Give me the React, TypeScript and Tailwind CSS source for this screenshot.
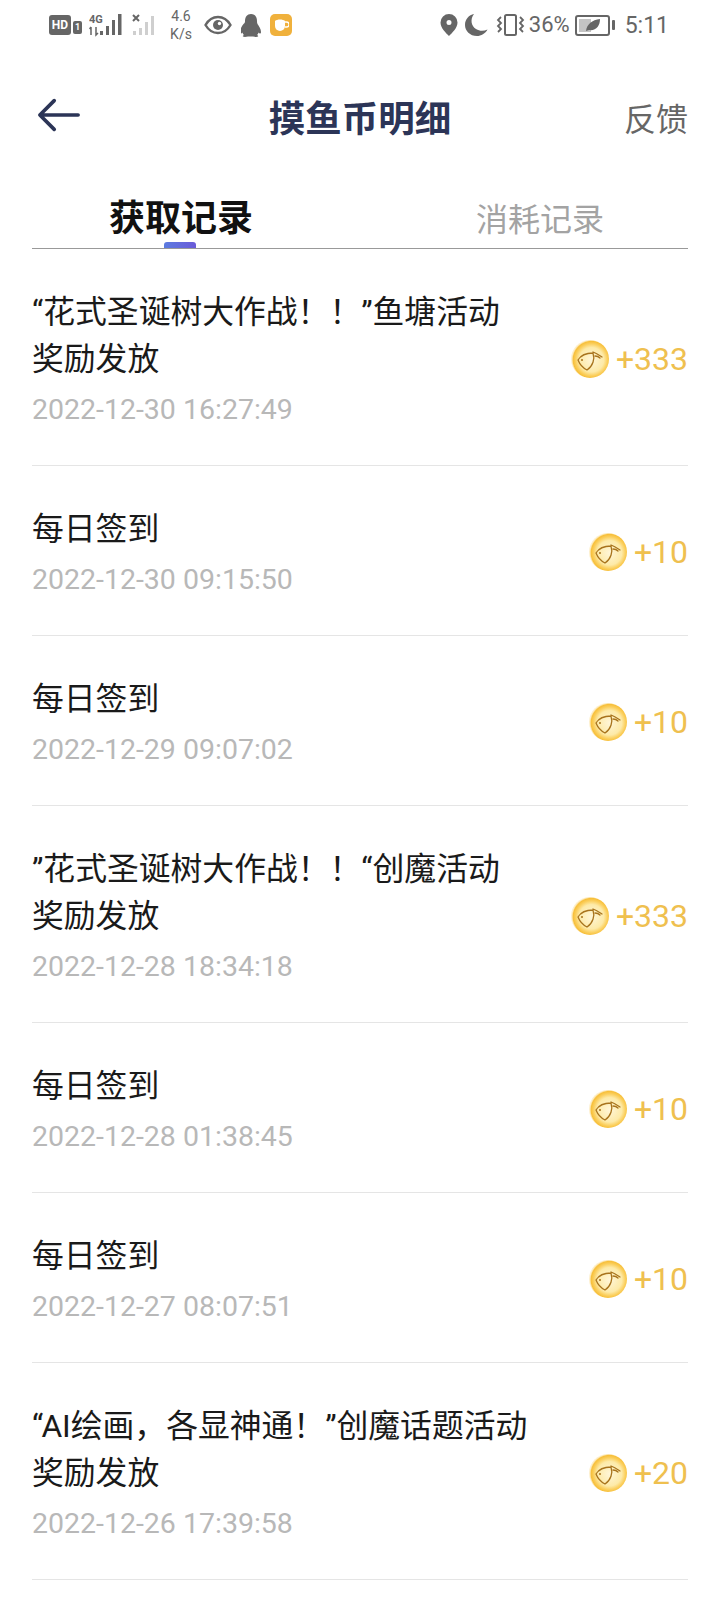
const cjk = "font-['Roboto','Noto_Sans_CJK_SC',sans-serif]"

const records = [
  { title: '“花式圣诞树大作战！！”鱼塘活动', sub: '奖励发放', time: '2022-12-30 16:27:49', amount: '+333' },
  { title: '每日签到', time: '2022-12-30 09:15:50', amount: '+10' },
  { title: '每日签到', time: '2022-12-29 09:07:02', amount: '+10' },
  { title: '”花式圣诞树大作战！！“创魔活动', sub: '奖励发放', time: '2022-12-28 18:34:18', amount: '+333' },
  { title: '每日签到', time: '2022-12-28 01:38:45', amount: '+10' },
  { title: '每日签到', time: '2022-12-27 08:07:51', amount: '+10' },
  { title: '“AI绘画，各显神通！”创魔话题活动', sub: '奖励发放', time: '2022-12-26 17:39:58', amount: '+20' },
]

function Coin() {
  return (
    <svg width="38" height="38" viewBox="0 0 38 38" className="shrink-0">
      <defs>
        <radialGradient id="coin" cx="54%" cy="52%" r="52%">
          <stop offset="0%" stopColor="#fff6d8" />
          <stop offset="62%" stopColor="#fdeaa8" />
          <stop offset="80%" stopColor="#fbd060" />
          <stop offset="93%" stopColor="#f7bf3a" />
          <stop offset="100%" stopColor="#fad36f" stopOpacity="0.35" />
        </radialGradient>
      </defs>
      <circle cx="19" cy="19" r="19" fill="url(#coin)" />
      <path d="M7 20C10 15 16 13 22 13M7 20c2 5 5 8 9 10M22 13c2 6 0 13-6 17M22 12c3 1 6 3 9 5M24 16c2 0 4 1 5 2" fill="none" stroke="#a8731c" strokeWidth="1.300" strokeLinecap="round" strokeLinejoin="round" />
      <circle cx="11" cy="20" r="1" fill="#a8731c" />
    </svg>
  )
}

function StatusBar() {
  return (
    <div className="h-[50px] flex items-center pl-[49px] pr-[51px] text-[#666666] font-['Roboto',sans-serif]">
      {/* HD + sim */}
      <div className="w-[22px] h-[20px] rounded-[3px] bg-[#666666] text-white text-[12px] font-bold leading-[20px] text-center">HD</div>
      <div className="ml-[2px] mt-[5px] w-[9px] h-[13px] rounded-[2px] bg-[#666666] text-white text-[9px] font-bold leading-[13px] text-center">1</div>
      {/* signal 1 */}
      <svg width="36" height="24" viewBox="0 0 36 24" className="ml-[7px]" fill="#666666">
        <text x="0" y="10" fontSize="11" fontWeight="700" fontFamily="Roboto">4G</text>
        <path d="M2 14v8M0.500 16l1.500-2M7 14v8l2-2" stroke="#666666" strokeWidth="1.500" fill="none" />
        <rect x="11" y="18" width="3" height="4" />
        <rect x="17" y="13" width="3" height="9" />
        <rect x="23" y="7" width="3" height="15" />
        <rect x="29" y="1" width="3.500" height="21" />
      </svg>
      {/* signal 2 */}
      <svg width="26" height="24" viewBox="0 0 26 24" className="ml-[7px]">
        <path d="M1 2l6 6M7 2l-6 6" stroke="#666666" strokeWidth="2" />
        <g fill="#cfcfcf">
          <rect x="1" y="18" width="3" height="4" />
          <rect x="7" y="15" width="3" height="7" />
          <rect x="13" y="9" width="3" height="13" />
          <rect x="19" y="3" width="3" height="19" />
        </g>
      </svg>
      <div className="ml-[10px] w-[26px] text-[14px] leading-[18px] text-center">4.6<br />K/s</div>
      {/* eye */}
      <svg width="28" height="20" viewBox="0 0 28 20" className="ml-[10px]" fill="none">
        <path d="M1.5 10C5 4 9 2 14 2s9 2 12.5 8C23 16 19 18 14 18S5 16 1.5 10z" stroke="#666666" strokeWidth="2.4" />
        <circle cx="14" cy="10" r="5" fill="#666666" />
        <circle cx="15.5" cy="8.5" r="1.7" fill="#fff" />
      </svg>
      {/* qq penguin */}
      <svg width="20" height="23" viewBox="0 0 20 23" className="ml-[9px]" fill="#666666">
        <path d="M10 0c4 0 6 3 6 7 0 1 0 2 .5 3 1.500 2 3.500 5 3.500 8 0 1-.5 1.500-1 1.500s-1-.5-1.500-1c-.2 1-.7 2-1.500 2.500 1 .5 1.500 1 1 1.500-.5.5-3 .5-5 0h-5c-2 .5-4.500.5-5 0-.5-.5 0-1 1-1.500-.8-.5-1.300-1.500-1.500-2.500-.5.5-1 1-1.500 1s-1-.5-1-1.500c0-3 2-6 3.500-8C4 9 4 8 4 7c0-4 2-7 6-7z" />
      </svg>
      {/* coffee app */}
      <div className="ml-[9px] w-[22px] h-[22px] rounded-[5px] bg-[#f0b13c] flex items-center justify-center">
        <svg width="16" height="14" viewBox="0 0 16 14" fill="#fff">
          <path d="M2 3c2-2 8-2 10 0v5a5 5 0 0 1-10 0z" />
          <path d="M12 4h1.500a2 2 0 0 1 0 5H12" fill="none" stroke="#fff" strokeWidth="1.300" />
        </svg>
      </div>
      <div className="flex-1" />
      {/* location */}
      <svg width="18" height="22" viewBox="0 0 18 22" fill="#666666">
        <path fillRule="evenodd" d="M9 0a8.500 8.500 0 0 1 8.500 8.500C17.500 14 12 19 9 22 6 19 .5 14 .5 8.500A8.500 8.500 0 0 1 9 0zm0 6a2.500 2.500 0 1 0 0 5 2.500 2.500 0 0 0 0-5z" />
      </svg>
      {/* moon */}
      <svg width="23" height="22" viewBox="0 0 23 22" className="ml-[7px]" fill="#666666">
        <path d="M9 0C5 5 6 12 11 15c4 2.500 8 2 11.500 .5C20.500 19.500 16 22 12 22 5 22 0 17 0 11 0 5 4 1 9 0z" />
      </svg>
      {/* vibrate */}
      <svg width="29" height="22" viewBox="0 0 29 22" className="ml-[8px]" fill="none" stroke="#666666">
        <rect x="9" y="1" width="11" height="20" rx="1.500" strokeWidth="2" />
        <path d="M5 3l-3 3 3 3-3 3 3 3-3 3M24 3l3 3-3 3 3 3-3 3 3 3" strokeWidth="1.800" />
      </svg>
      <div className="ml-[4px] text-[22px] leading-none">36%</div>
      {/* battery */}
      <div className="ml-[5px] w-[35px] h-[21px] rounded-[3px] border-2 border-[#666666] flex items-center p-[2px] relative">
        <div className="w-[12px] h-full bg-[#c4c4c4]" />
        <svg width="16" height="13" viewBox="0 0 16 13" className="absolute left-[8px] top-[2px]" fill="#666666">
          <path d="M1 12C2 5 7 1 15 0c0 7-4 12-11 11l-3 1z" />
        </svg>
      </div>
      <div className="ml-[2px] w-[3px] h-[10px] rounded-[1px] bg-[#666666]" />
      <div className="ml-[10px] text-[23px] leading-none">5:11</div>
    </div>
  )
}

export default function App() {
  return (
    <div className={`w-[720px] h-[1600px] overflow-hidden bg-white ${cjk}`}>
      <StatusBar />

      {/* Header */}
      <div className="mt-[22px] h-[92px] px-[32px] flex items-center justify-between relative">
        <svg width="44" height="34" viewBox="0 0 46 34" fill="none" stroke="#2c3557" strokeWidth="3.800" strokeLinecap="round" strokeLinejoin="round" className="ml-[5px] -mt-[6px]">
          <path d="M43 17H3M18 2L3 17l15 15" />
        </svg>
        <div className="absolute left-0 right-0 mt-[4px] text-center text-[36.500px] leading-[44px] font-bold text-[#2c3557]">摸鱼币明细</div>
        <div className="mt-[4px] text-[32px] leading-[40px] text-[#666666]">反馈</div>
      </div>

      {/* Tabs */}
      <div className="mx-[32px] h-[85px] border-b border-[#999999] flex relative">
        <div className="w-1/2 pl-[77px] pt-[31px] text-[36px] leading-[48px] font-bold text-[#111111]">获取记录</div>
        <div className="w-1/2 pl-[116px] pt-[34px] text-[32px] leading-[44px] text-[#a3a3a3]">消耗记录</div>
        <div className="absolute left-[132px] bottom-0 w-[32px] h-[6px] rounded-t-[3px] bg-gradient-to-r from-[#5b7be0] to-[#6a5ad8]" />
      </div>

      {/* Records */}
      <div className="mx-[32px]">
        {records.map((r) => (
          <div key={r.time} className="flex items-center justify-between pt-[40px] pb-[28px] border-b border-[#e5e5e5]">
            <div>
              <div className="text-[31.800px] leading-[47px] text-[#1a1a1a]">{r.title}</div>
              {r.sub && <div className="text-[31.800px] leading-[47px] text-[#1a1a1a]">{r.sub}</div>}
              <div className="text-[28.500px] leading-[54px] text-[#b8b8b8]">{r.time}</div>
            </div>
            <div className="flex items-center gap-[7px] mt-[-9px]">
              <Coin />
              <div className="text-[32px] leading-[40px] text-[#efc04f]">{r.amount}</div>
            </div>
          </div>
        ))}
      </div>
    </div>
  )
}
